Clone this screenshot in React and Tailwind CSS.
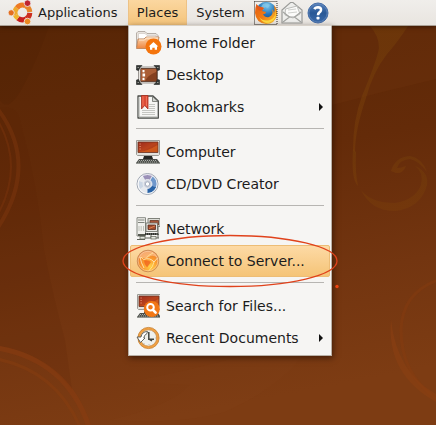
import React from "react";

function Wallpaper() {
  return (
    <svg
      className="absolute inset-0 h-full w-full"
      viewBox="0 0 436 425"
      preserveAspectRatio="xMidYMid slice"
      aria-hidden="true"
    >
      <defs>
        <linearGradient id="wall" x1="0.1" y1="0" x2="0.3" y2="1">
          <stop offset="0" stopColor="#562505" />
          <stop offset="0.45" stopColor="#642b09" />
          <stop offset="0.75" stopColor="#733510" />
          <stop offset="1" stopColor="#7d3c13" />
        </linearGradient>
        <linearGradient id="vine" x1="0" y1="0" x2="0" y2="1">
          <stop offset="0" stopColor="#75400a" />
          <stop offset="1" stopColor="#7b3f0a" />
        </linearGradient>
      </defs>
      <rect width="436" height="425" fill="url(#wall)" />
      <path d="M0 26H49Q34 68 20 92Q8 112 0 100Z" fill="#491f03" opacity="0.2" />
      <path d="M0 108Q17 105 20 120Q37 180 44 250Q54 300 65 340L72 390Q42 352 0 346Z" fill="#592406" opacity="0.15" />
      <path d="M332 26H436V79Q385 91 332 105Z" fill="#713410" opacity="0.3" />
      <path d="M130 382Q192 370 242 356L302 356Q275 390 225 412Q180 425 110 420Q170 406 190 385Z" fill="#81401a" opacity="0.2" />
      <g fill="none" stroke="#8a3d10">
        <path d="M-3 108Q40 164 -3 229" strokeWidth="4" opacity="0.35" />
        <path d="M-3 119Q25 166 -3 216" strokeWidth="2" opacity="0.3" />
        <path d="M-3 348Q67 360 89 427" strokeWidth="5" opacity="0.55" />
        <path d="M-3 359Q56 371 80 427" strokeWidth="3" opacity="0.45" />
        <path d="M438 280Q402 293 401 330Q401 375 438 400" strokeWidth="3" opacity="0.4" />
      </g>
      <path d="M391 320Q386 374 436 402V394Q397 373 391 320Z" fill="#8a4012" opacity="0.6" />
      <g fill="url(#vine)">
        <path d="M370 26H408Q397 43 387 54Q373 72 366 98Q355 130 355 152L353 150Q353 120 362 96Q377 60 379 48Q379 36 370 26Z" opacity="0.5" />
        <path d="M353 149L356 152Q355 172 358 186Q351 180 353 149Z" opacity="0.5" />
        <path d="M361 190Q371 203 395 203Q415 200 421 185Q424 172 415 166Q429 172 427 185Q421 208 395 211Q371 211 361 190Z" opacity="0.42" />
        <path d="M391 171Q395 157 410 156Q422 158 427 172Q419 161 410 159Q399 160 397 168Q401 168 406 166Q403 174 396 173Z" opacity="0.45" />
      </g>
    </svg>
  );
}

function Icon({ children, className = "h-6 w-6" }) {
  return (
    <svg className={`shrink-0 ${className}`} viewBox="0 0 24 24" aria-hidden="true">
      {children}
    </svg>
  );
}

function UbuntuIcon() {
  return (
    <svg className="h-[25px] w-[25px] shrink-0" viewBox="0 0 25 25" aria-hidden="true">
      <g fill="none" strokeWidth="5">
        <path d="M7.4 15A7.3 7.3 0 0 1 9 7.8" stroke="#efa92c" />
        <path d="M9 7.8A7.3 7.3 0 0 1 17.5 5.8" stroke="#ee7a25" />
        <path d="M17.5 5.8A7.3 7.3 0 0 1 21.8 12" stroke="#e8862a" />
        <path d="M21.8 12.8A7.3 7.3 0 0 1 18 18.9" stroke="#cc2f20" />
        <path d="M18 18.9A7.3 7.3 0 0 1 10 18.2" stroke="#c81f1d" />
        <path d="M10 18.2A7.3 7.3 0 0 1 7.4 15" stroke="#efb42e" />
      </g>
      <g stroke="#f0eeeb" strokeWidth="0.8">
        <circle cx="19.5" cy="3.2" r="3.3" fill="#bf2430" />
        <circle cx="3.2" cy="12.8" r="3.1" fill="#e46e20" />
        <circle cx="19.5" cy="21.5" r="3.3" fill="#ed8a21" />
      </g>
    </svg>
  );
}

function FirefoxIcon() {
  return (
    <Icon>
      <defs>
        <radialGradient id="ffBlue" cx="0.55" cy="0.2" r="0.8">
          <stop offset="0" stopColor="#7ecbef" />
          <stop offset="0.5" stopColor="#2877b9" />
          <stop offset="1" stopColor="#173c7c" />
        </radialGradient>
        <linearGradient id="ffFire" x1="0" y1="0" x2="1" y2="1">
          <stop offset="0" stopColor="#e65c12" />
          <stop offset="0.5" stopColor="#ef7b13" />
          <stop offset="1" stopColor="#ffcf32" />
        </linearGradient>
      </defs>
      <circle cx="12.2" cy="11" r="10.2" fill="url(#ffBlue)" />
      <path d="M9 3Q13 1 16 4L14 7L11 6L9 9L6 8Z" fill="#87c9e8" opacity="0.7" />
      <path d="M2.5 3Q4 6 7 6L10 7L8 10L12 11Q12 13 9 13Q11 17 15 16Q20 14 18 8Q20 10 20 12Q21 9 20 4Q24 9 23 14Q21 23 12 23Q2 22 1 12Q1 7 2.5 3Z" fill="url(#ffFire)" />
      <path d="M2.5 3Q4 6 7 6L10 7L7 10Q2 9 2.5 3Z" fill="#e4581a" />
      <path d="M20.5 5Q24 16 16 19Q9 21 5 16Q9 23 15 22Q25 18 20.5 5Z" fill="#ffd940" />
      <rect x="0.5" y="0.5" width="22.5" height="23" fill="none" stroke="#302b26" strokeDasharray="1 1" />
    </Icon>
  );
}

function MailIcon() {
  return (
    <Icon>
      <path d="M2 22V9L10.5 1.5H13L22 9V22Z" fill="#eeeeec" stroke="#9a9b98" strokeWidth="1.2" />
      <path d="M5.5 8L17 5L20 13L13 17L5 14Z" fill="#fbfbfa" stroke="#bdbebb" strokeWidth="1" />
      <path d="M8 9L16 8M8 12L17 11" stroke="#d0d1ce" />
      <path d="M3 21L9.5 16H14.5L21 21M3 11L9.5 16M21 11L14.5 16" fill="none" stroke="#a3a4a1" strokeWidth="1.2" />
    </Icon>
  );
}

function HelpIcon() {
  return (
    <Icon>
      <defs>
        <linearGradient id="help" x1="0" y1="0" x2="0" y2="1">
          <stop offset="0" stopColor="#5680ba" />
          <stop offset="0.5" stopColor="#285896" />
          <stop offset="1" stopColor="#3c6bab" />
        </linearGradient>
      </defs>
      <circle cx="12" cy="12" r="10" fill="url(#help)" stroke="#456ea8" />
      <circle cx="12" cy="12" r="9" fill="none" stroke="#6a8dc0" strokeWidth="0.6" />
      <path d="M8.5 8.2Q9.3 6.2 12 6.2Q15.2 6.4 15 9Q14.9 10.5 13.2 11.6Q12 12.5 12 14.2" fill="none" stroke="#fff" strokeWidth="2.6" />
      <rect x="10.5" y="15.8" width="3" height="2.8" rx="0.8" fill="#fff" />
    </Icon>
  );
}

function HomeFolderIcon() {
  return (
    <svg className="h-6 w-[26px] shrink-0" viewBox="0 0 26 24" aria-hidden="true">
      <defs>
        <linearGradient id="folder" x1="0" y1="0" x2="0" y2="1">
          <stop offset="0" stopColor="#fcd5ad" />
          <stop offset="1" stopColor="#ee8640" />
        </linearGradient>
      </defs>
      <path d="M0.5 16V2L2 0.5H9L11 2.5H20L22 4.5V16Z" fill="#e9e4df" stroke="#a89f97" strokeWidth="0.8" />
      <path d="M2.5 2.5H9L11 4.5H20V8H2.5Z" fill="#fff" stroke="#c2b9b1" strokeWidth="0.5" />
      <path d="M2 8H8L10 6H23L21 17.5H0.5Z" fill="url(#folder)" stroke="#b97c52" strokeWidth="0.8" />
      <path d="M3 9H8.5L10.5 7H22" fill="none" stroke="#ffe9d1" />
      <circle cx="17.5" cy="15.5" r="8" fill="#f4740c" />
      <path d="M17.5 11L22.3 15.5H21V18.7H18.7V16.8H16.3V18.7H14V15.5H12.7Z" fill="#fff" />
    </svg>
  );
}

function DesktopIcon() {
  return (
    <Icon>
      <path d="M2.5 4H21.5V20H2.5Z" fill="#e7e5e1" stroke="#9b9793" />
      <path d="M4.8 5.5H21V18.5H4.8Z" fill="#84401f" stroke="#54301f" strokeWidth="0.8" />
      <path d="M5 6H20.5L20 9Q12 12 9 18H5Z" fill="#bb6b40" opacity="0.7" />
      <g fill="#fff">
        <rect x="6.5" y="7" width="2" height="2.3" />
        <rect x="6.5" y="10.5" width="2.6" height="3" />
        <rect x="6.5" y="14.8" width="2" height="2.3" />
      </g>
      <g fill="#343735" stroke="#202321" strokeWidth="0.6">
        <path d="M0.5 2.5H6L4 4.5L2.5 7.5L0.5 7Z" />
        <path d="M23.5 2.5H18L20 4.5L21.5 7.5L23.5 7Z" />
        <path d="M0.5 21.5H6L4 19.5L2.5 16.5L0.5 17Z" />
        <path d="M23.5 21.5H18L20 19.5L21.5 16.5L23.5 17Z" />
      </g>
      <path d="M1.5 4.5H3M21 4.5H22.5M1.5 19.5H3M21 19.5H22.5" stroke="#91948f" />
    </Icon>
  );
}

function BookmarksIcon() {
  return (
    <Icon>
      <path d="M2 1H17L22.3 6V23H2Z" fill="#f6f6f4" stroke="#4b4d4a" strokeWidth="1.3" strokeLinejoin="round" />
      <path d="M3 2.5V22H21.8" fill="none" stroke="#a9aba6" />
      <path d="M16.5 1.5V6.5H22Z" fill="#d3d5d0" stroke="#696c67" strokeWidth="0.8" />
      <path d="M6 15.5H19M6 17.5H19M6 19.5H19M13 9.5H19M13 11.5H19M13 13.5H19" stroke="#bfc1bc" strokeWidth="0.9" />
      <path d="M5.5 0.5H12V14L8.7 10.5L5.5 14Z" fill="#dd4d37" stroke="#a72e1e" strokeWidth="0.8" />
      <path d="M7 1.5V11M10.5 1.5V11" stroke="#f5836a" strokeWidth="0.7" />
    </Icon>
  );
}

function MonitorArt() {
  return (
    <>
      <defs>
        <linearGradient id="screen" x1="0" y1="0" x2="1" y2="1">
          <stop offset="0" stopColor="#9b2a1d" />
          <stop offset="0.5" stopColor="#b9431d" />
          <stop offset="1" stopColor="#9d3212" />
        </linearGradient>
      </defs>
      <path d="M0.5 0.5H23.5V14.5L22.5 15.5H1.5L0.5 14.5Z" fill="#e2e1dd" stroke="#9b9a95" />
      <path d="M2 2H22V12.5H2Z" fill="url(#screen)" stroke="#6b3322" strokeWidth="0.8" />
      <path d="M2.5 12Q12 11 21.5 5V12Z" fill="#ec731f" opacity="0.5" />
      <path d="M3.5 4H4.7M3.5 6.5H4.7M3.5 9H4.7" stroke="#f5b18d" strokeWidth="0.8" />
      <path d="M8 16H16L17 19H7Z" fill="#242624" />
      <path d="M3 19H21L24 23H0Z" fill="#4b4e4a" />
      <path d="M3 20.5H21M2 22H22" stroke="#c5c7c3" strokeWidth="0.8" strokeDasharray="1 1" />
      <path d="M0 23.3H24" stroke="#7d807b" />
    </>
  );
}

function ComputerIcon() {
  return <Icon><MonitorArt /></Icon>;
}

function DiscIcon() {
  return (
    <Icon>
      <circle cx="11.5" cy="12" r="10.5" fill="#e6e9ee" stroke="#a1a8b4" />
      <path d="M6.5 3.2Q11 1.2 16.5 3L13.2 8.5H9.5Z" fill="#9b90b8" />
      <path d="M17 4Q23 9 20.5 15L14.5 13.5L14 9Z" fill="#6f97cb" />
      <path d="M11.5 15.5L14.5 13.5L20.5 15Q18 21 11.5 21.2Z" fill="#2862a6" />
      <path d="M3 9L8 11L8 14L4 17Q2 13 3 9Z" fill="#cbd6e4" />
      <circle cx="11.5" cy="12" r="4.4" fill="#cbd0dc" stroke="#eef0f4" />
      <circle cx="11.5" cy="12" r="2.2" fill="#fff" stroke="#98a1b2" strokeWidth="0.8" />
      <circle cx="11.5" cy="12" r="9.5" fill="none" stroke="#fff" opacity="0.8" />
    </Icon>
  );
}

function NetworkIcon() {
  return (
    <Icon>
      <path d="M1 0.7H9.5V19H1Z" fill="#f0f0ed" stroke="#888b84" />
      <path d="M2 3H8.5M2 5.5H8.5" stroke="#80847d" />
      <path d="M3 9V14M5.2 9V14M7.5 9V14" stroke="#bfc2ba" />
      <path d="M12 1.5H24V9.5H12Z" fill="#dedfd9" stroke="#80827a" />
      <path d="M14 3.5H22.5V8H14Z" fill="#a7563a" stroke="#643726" strokeWidth="0.8" />
      <path d="M10 6H21.5V14.5H10Z" fill="#e4e4e0" stroke="#6a6c65" strokeWidth="0.8" />
      <path d="M12 8H19.5V12.5H12Z" fill="#a14c2d" stroke="#592b20" strokeWidth="0.8" />
      <path d="M13 11.5L19 9" stroke="#df8051" />
      <path d="M9 16H22L23 18H9Z" fill="#30322e" />
      <path d="M2 17H9V19H2Z" fill="#55584f" />
      <path d="M15 18V21M22 10V21M5 20V23M8 21H23M1 22.5H9" stroke="#5d6159" />
      <rect x="4" y="19.5" width="5" height="2.5" fill="#e4e6df" stroke="#606459" strokeWidth="0.7" />
      <rect x="15" y="19.5" width="5" height="2.5" fill="#e4e6df" stroke="#606459" strokeWidth="0.7" />
      <path d="M10 17H21" stroke="#b9bcb4" strokeWidth="0.7" strokeDasharray="1 1" />
    </Icon>
  );
}

function ServerIcon() {
  return (
    <Icon>
      <defs>
        <radialGradient id="globe" cx="0.6" cy="0.75" r="0.75">
          <stop offset="0" stopColor="#ffd048" />
          <stop offset="0.45" stopColor="#fb9c2e" />
          <stop offset="1" stopColor="#e9762c" />
        </radialGradient>
      </defs>
      <circle cx="12" cy="12" r="10.8" fill="url(#globe)" stroke="#c18a5b" strokeWidth="0.8" />
      <path d="M2.5 9Q5 2 12 2Q19 2.5 21.5 9Q17 5 13 8Q8 10 2.5 9Z" fill="#ffd2a6" opacity="0.55" />
      <path d="M4 8Q5 14 8 19M7.5 10.5Q14 8 18 13L21.5 9" fill="none" stroke="#ffe7b8" strokeWidth="0.9" />
      <path d="M18 13Q17 18 13 21.5M7.5 10.5L5 8M17 4Q12 6 10 9.5" fill="none" stroke="#ffe9a0" strokeWidth="0.8" />
      <path d="M8 11.5Q12 10.5 15 13L11 18.5Q8 15 8 11.5Z" fill="#f0601c" opacity="0.75" />
      <circle cx="12" cy="12" r="9.8" fill="none" stroke="#fff0dd" strokeWidth="0.7" opacity="0.6" />
    </Icon>
  );
}

function SearchIcon() {
  return (
    <Icon>
      <g transform="translate(1 0)"><MonitorArt /></g>
      <circle cx="15.8" cy="15" r="8" fill="#f27715" />
      <circle cx="14.5" cy="13.2" r="3.3" fill="none" stroke="#fff" strokeWidth="2" />
      <path d="M17 15.8L19.6 18.6" stroke="#fff" strokeWidth="2.6" strokeLinecap="round" />
    </Icon>
  );
}

function RecentIcon() {
  return (
    <Icon>
      <circle cx="12.5" cy="12" r="10.6" fill="#f2a041" stroke="#c58134" strokeWidth="0.8" />
      <circle cx="12.5" cy="12" r="8.2" fill="#eff0ec" stroke="#c88b45" strokeWidth="0.8" />
      <path d="M12.8 6V13.2H18M12.8 12.8L16 15" fill="none" stroke="#41443f" strokeWidth="1.5" />
      <path d="M11.5 5.5Q6 5.5 5 11H1L4.5 16.5L9 12H7.8Q8 9 11 7.5Z" fill="#fff" stroke="#555852" strokeWidth="0.9" />
      <path d="M7 18.5L8 17.5M18.5 7L19 6.5M19.5 12H20M13 18.5V19" stroke="#8b8d88" />
    </Icon>
  );
}

const groups = [
  [
    { label: "Home Folder", icon: HomeFolderIcon },
    { label: "Desktop", icon: DesktopIcon },
    { label: "Bookmarks", icon: BookmarksIcon, submenu: true },
  ],
  [
    { label: "Computer", icon: ComputerIcon },
    { label: "CD/DVD Creator", icon: DiscIcon },
  ],
  [
    { label: "Network", icon: NetworkIcon },
    { label: "Connect to Server...", icon: ServerIcon, active: true },
  ],
  [
    { label: "Search for Files...", icon: SearchIcon },
    { label: "Recent Documents", icon: RecentIcon, submenu: true },
  ],
];

function Annotation() {
  return (
    <svg
      className="pointer-events-none absolute -left-2 -top-3 z-10 h-[58px] w-[220px]"
      viewBox="0 0 220 58"
      aria-hidden="true"
    >
      <ellipse cx="108" cy="28" rx="107" ry="25.5" fill="none" stroke="#e0421b" strokeWidth="1.3" />
      <circle cx="215" cy="53.5" r="1.7" fill="#ee4513" />
    </svg>
  );
}

function MenuItem({ item }) {
  const Art = item.icon;
  return (
    <div className="relative">
      <button
        type="button"
        role="menuitem"
        aria-haspopup={item.submenu ? "menu" : undefined}
        className={`flex h-8 w-full items-center rounded-xs border pl-[5px] pr-1.5 text-left ${
          item.active
            ? "border-[#edbd76] bg-linear-to-b from-[#fddaa5] to-[#f5c477]"
            : "border-transparent"
        }`}
      >
        <span className="flex w-[30px] shrink-0 items-center">
          <Art />
        </span>
        <span className="grow">{item.label}</span>
        {item.submenu && (
          <svg className="h-2 w-1 shrink-0" viewBox="0 0 4 8" aria-hidden="true">
            <path d="M0 0L4 4L0 8Z" fill="#111" />
          </svg>
        )}
      </button>
      {item.active && <Annotation />}
    </div>
  );
}

function PlacesMenu() {
  return (
    <div
      role="menu"
      aria-label="Places"
      className="absolute left-0 top-full z-10 w-51 border border-[#b9b0a6] border-t-[#d8d2ca] bg-[#f6f5f3] p-px text-sm leading-4 shadow-[1px_2px_6px_rgba(30,12,0,0.6)]"
    >
      {groups.map((items, index) => (
        <React.Fragment key={items[0].label}>
          {index > 0 && (
            <div role="separator" className="h-[13px] px-1.5 pt-[5px]">
              <div className="border-t border-[#b7b5b2]" />
            </div>
          )}
          {items.map((item) => (
            <MenuItem key={item.label} item={item} />
          ))}
        </React.Fragment>
      ))}
    </div>
  );
}

export default function App() {
  return (
    <div className="relative min-h-screen overflow-hidden bg-[#67300e] font-['DejaVu_Sans',sans-serif] text-[13px] leading-4 text-[#1c1c1c]">
      <Wallpaper />
      <header className="relative flex h-[26px] items-stretch border-b border-[#aaa096] bg-linear-to-b from-[#f0eeeb] to-[#e9e5e0] shadow-[0_1px_4px_rgba(30,12,0,0.6)]">
        <button type="button" className="flex w-32 items-center gap-[5px] pl-2">
          <UbuntuIcon />
          Applications
        </button>
        <div className="relative">
          <button
            type="button"
            aria-haspopup="menu"
            aria-expanded="true"
            className="h-full w-[59px] border-x border-[#edc286] bg-linear-to-b from-[#fbd7a0] to-[#f4c47b]"
          >
            Places
          </button>
          <PlacesMenu />
        </div>
        <button type="button" className="w-[67px]">System</button>
        <div className="flex items-center gap-0.5">
          <button type="button" aria-label="Firefox"><FirefoxIcon /></button>
          <button type="button" aria-label="Mail"><MailIcon /></button>
          <button type="button" aria-label="Help"><HelpIcon /></button>
        </div>
      </header>
    </div>
  );
}
